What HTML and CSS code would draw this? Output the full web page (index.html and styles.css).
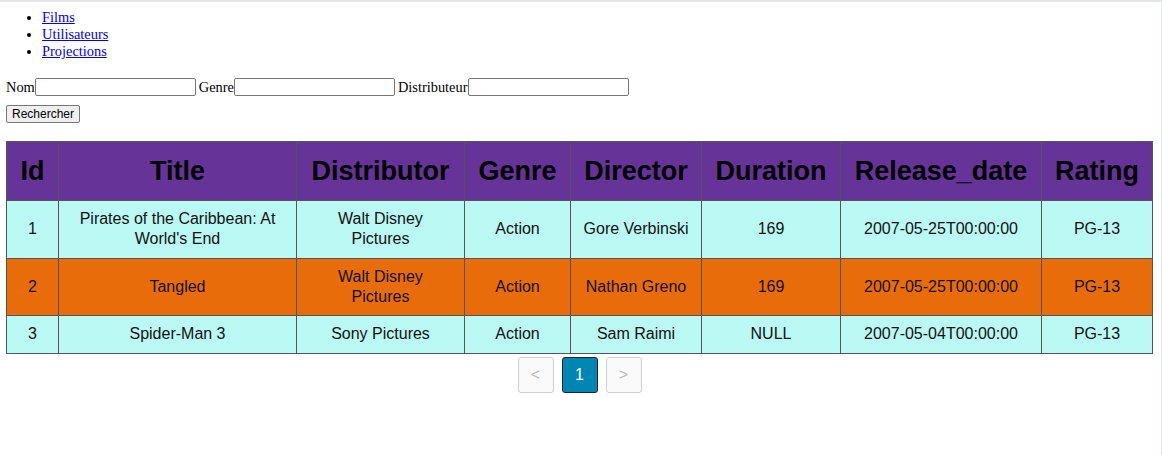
FILE: index.html
```html
<!DOCTYPE html>
<html lang="fr">
<head>
<meta charset="utf-8">
<title>Films</title>
<link rel="stylesheet" href="styles.css">
</head>
<body>
<ul class="nav">
  <li><a href="#">Films</a></li>
  <li><a href="#">Utilisateurs</a></li>
  <li><a href="#">Projections</a></li>
</ul>
<form class="search">
  <div class="fields">
    <label>Nom<input type="text" class="field"></label>
    <label>Genre<input type="text" class="field"></label>
    <label>Distributeur<input type="text" class="field"></label>
  </div>
  <div class="actions"><button type="button" class="btn">Rechercher</button></div>
</form>
<table class="films">
  <colgroup>
    <col class="c-id"><col class="c-title"><col class="c-dist"><col class="c-genre">
    <col class="c-dir"><col class="c-dur"><col class="c-date"><col class="c-rating">
  </colgroup>
  <thead>
    <tr><th>Id</th><th>Title</th><th>Distributor</th><th>Genre</th><th>Director</th><th>Duration</th><th>Release_date</th><th>Rating</th></tr>
  </thead>
  <tbody>
    <tr class="odd"><td>1</td><td>Pirates of the Caribbean: At World's End</td><td>Walt Disney Pictures</td><td>Action</td><td>Gore Verbinski</td><td>169</td><td>2007-05-25T00:00:00</td><td>PG-13</td></tr>
    <tr class="even"><td>2</td><td>Tangled</td><td>Walt Disney Pictures</td><td>Action</td><td>Nathan Greno</td><td>169</td><td>2007-05-25T00:00:00</td><td>PG-13</td></tr>
    <tr class="odd"><td>3</td><td>Spider-Man 3</td><td>Sony Pictures</td><td>Action</td><td>Sam Raimi</td><td>NULL</td><td>2007-05-04T00:00:00</td><td>PG-13</td></tr>
  </tbody>
</table>
<div class="pager">
  <button type="button" class="page disabled">&lt;</button>
  <button type="button" class="page active">1</button>
  <button type="button" class="page disabled">&gt;</button>
</div>
</body>
</html>
```

FILE: styles.css
```css
html {
  border-top: 2px solid #e6e6e6;
  border-right: 1px solid #dfe5f5;
  min-height: 100%;
  box-sizing: border-box;
}
body {
  margin: 0 8px 0 6px;
  font-family: "Liberation Serif", "Times New Roman", serif;
  font-size: 14.4px;
  color: #000;
  background: #fff;
}
.nav {
  margin: 7px 0 17px 0;
  padding-left: 36px;
  line-height: 17px;
}
.nav a { color: #0000ee; }
.search { margin: 0; }
.fields {
  line-height: 18px;
  height: 20px;
  display: flex;
  align-items: center;
  gap: 3px;
}
.fields label {
  display: flex;
  align-items: center;
}
.field {
  box-sizing: border-box;
  width: 161px;
  height: 18px;
  margin: 0;
  padding: 1px 2px;
  border: 1px solid #767676;
  border-radius: 2px;
  font-size: 12px;
}
.actions { margin-top: 8px; }
.btn {
  font-family: "Liberation Sans", Arial, sans-serif;
  font-size: 12px;
  height: 18px;
  width: 74px;
  padding: 0;
  margin: 0;
  border: 1px solid #767676;
  border-radius: 2px;
  background: #efefef;
  color: #000;
  line-height: 14px;
}
.films {
  margin-top: 18px;
  width: 1147px;
  table-layout: fixed;
  border-collapse: collapse;
  font-family: "Liberation Sans", Arial, sans-serif;
  text-align: center;
}
.c-id { width: 52px; }
.c-title { width: 238px; }
.c-dist { width: 168px; }
.c-genre { width: 106px; }
.c-dir { width: 131px; }
.c-dur { width: 139px; }
.c-date { width: 201px; }
.films th, .films td {
  border: 1px solid #555;
}
.films th {
  background: #663399;
  font-size: 27px;
  font-weight: bold;
  line-height: 30px;
  padding: 14px 4px;
  color: #000;
  white-space: nowrap;
}
.films td {
  font-size: 16px;
  line-height: 20px;
  padding: 8px 12px 8.65px;
  color: #111;
}
.films tr.odd td { background: #bbf9f5; }
.films tr.even td { background: #e96c0a; }
.pager {
  width: 1147px;
  display: flex;
  justify-content: center;
  gap: 8px;
  margin-top: 3px;
}
.page {
  box-sizing: border-box;
  width: 36px;
  height: 36px;
  border-radius: 3px;
  font-family: "Liberation Sans", Arial, sans-serif;
  font-size: 16px;
  padding: 0;
  margin: 0;
}
.page.disabled {
  background: #fafafa;
  border: 1px solid #cfcfcf;
  color: #bbb;
}
.page.active {
  background: #0086b3;
  border: 1px solid #222;
  color: #fff;
}
```
